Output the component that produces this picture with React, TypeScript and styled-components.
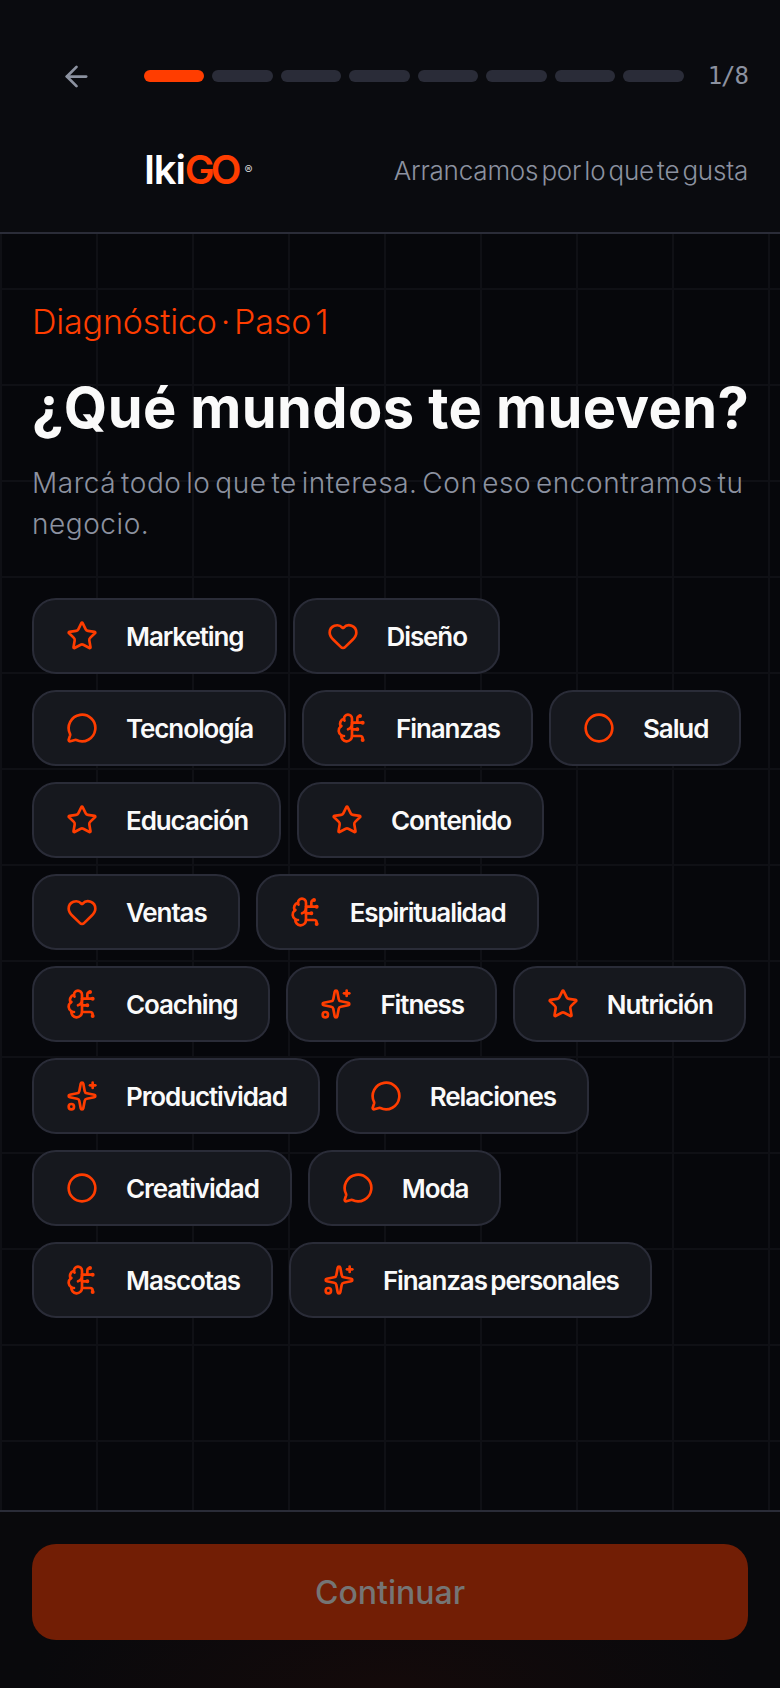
import React from "react";
import styled, { createGlobalStyle } from "styled-components";
import { ArrowLeft, BrainCircuit, Circle, Heart, MessageCircle, Sparkles, Star } from "lucide-react";

const Global = createGlobalStyle`
  html, body { margin: 0; padding: 0; background: #06070b; }
  * { box-sizing: border-box; }
`;

const Page = styled.div`
  width: 780px;
  height: 1688px;
  display: flex;
  flex-direction: column;
  font-family: Inter, "Noto Sans", sans-serif;
  background-color: #06070b;
  background-image:
    linear-gradient(to right, #0f1015 2px, transparent 2px),
    linear-gradient(to bottom, #0f1015 2px, transparent 2px);
  background-size: 96px 96px;
  background-position: 0 0;
`;

const Header = styled.header`
  height: 234px;
  background: #0a0b0f;
  border-bottom: 2px solid #2a2c38;
  padding: 32px 32px 0;
`;

const TopRow = styled.div`
  display: flex;
  align-items: center;
  gap: 24px;
  height: 88px;
`;

const BackButton = styled.button`
  width: 88px;
  height: 88px;
  border: 0;
  padding: 0;
  background: none;
  color: #8c92a0;
  display: flex;
  align-items: center;
  justify-content: center;
`;

const Bars = styled.div`
  flex: 1;
  display: flex;
  gap: 8px;
`;

const Bar = styled.div<{ $on?: boolean }>`
  flex: 1;
  height: 12px;
  border-radius: 6px;
  background: ${(p) => (p.$on ? "#ff3d00" : "#2a2c38")};
`;

const Counter = styled.span`
  font-family: "DejaVu Sans Mono", monospace;
  font-size: 24px;
  letter-spacing: -1px;
  color: #8c92a0;
  line-height: 1;
`;

const BrandRow = styled.div`
  display: flex;
  align-items: center;
  justify-content: space-between;
  padding-left: 112px;
  margin-top: 14px;
  height: 72px;
`;

const Logo = styled.div`
  display: flex;
  align-items: baseline;
  font-size: 40px;
  font-weight: 600;
  letter-spacing: -1.2px;
  color: #fff;
  line-height: 1;
`;

const LogoAccent = styled.span`
  color: #ff3d00;
  letter-spacing: -4px;
`;

const Reg = styled.sup`
  font-size: 12px;
  letter-spacing: 0;
  font-weight: 500;
  margin-left: 7px;
  align-self: center;
  color: #d0d0d0;
`;

const Tagline = styled.span`
  font-size: 26px;
  font-weight: 300;
  color: #8c92a0;
  letter-spacing: -0.2px;
  word-spacing: -4px;
`;

const Main = styled.main`
  flex: 1;
  padding: 66px 32px 0;
`;

const Eyebrow = styled.div`
  font-size: 34px;
  font-weight: 300;
  color: #ff3d00;
  line-height: 44px;
  letter-spacing: -0.15px;
  word-spacing: -5.5px;
`;

const Title = styled.h1`
  margin: 32px 0 0;
  font-size: 56px;
  font-weight: 700;
  line-height: 64px;
  letter-spacing: 0.4px;
  color: #fafafa;
  white-space: nowrap;
`;

const Sub = styled.p`
  margin: 23px 0 0;
  font-size: 28px;
  font-weight: 300;
  line-height: 41px;
  color: #8c92a0;
  letter-spacing: 0.55px;
  word-spacing: -3.6px;
`;

const Chips = styled.div`
  display: flex;
  flex-wrap: wrap;
  gap: 16px;
  margin-top: 53px;
`;

const Chip = styled.button`
  height: 76px;
  padding: 0 31px 0 32px;
  display: flex;
  align-items: center;
  gap: 28px;
  background: #16181e;
  border: 2px solid #2a2c38;
  border-radius: 24px;
  color: #fafafa;
  font-family: inherit;
  font-size: 26px;
  font-weight: 600;
  letter-spacing: -1.1px;
  word-spacing: -2px;
  white-space: nowrap;
  svg { color: #ff3d00; flex: none; }
`;

const Footer = styled.footer`
  height: 178px;
  border-top: 2px solid #2a2c38;
  padding: 32px 32px 0;
  background:
    radial-gradient(ellipse 360px 130px at 50% 100%, #140a0a, transparent),
    #09090c;
`;

const Cta = styled.button`
  width: 100%;
  height: 96px;
  border: 0;
  border-radius: 24px;
  background: #721e05;
  color: #757575;
  font-family: inherit;
  font-size: 32px;
  font-weight: 500;
`;

const icons = { star: Star, heart: Heart, msg: MessageCircle, brain: BrainCircuit, circle: Circle, spark: Sparkles };
type IconKey = keyof typeof icons;

const topics: [string, IconKey][] = [
  ["Marketing", "star"], ["Diseño", "heart"], ["Tecnología", "msg"], ["Finanzas", "brain"], ["Salud", "circle"],
  ["Educación", "star"], ["Contenido", "star"], ["Ventas", "heart"], ["Espiritualidad", "brain"],
  ["Coaching", "brain"], ["Fitness", "spark"], ["Nutrición", "star"], ["Productividad", "spark"],
  ["Relaciones", "msg"], ["Creatividad", "circle"], ["Moda", "msg"], ["Mascotas", "brain"], ["Finanzas personales", "spark"],
];

export default function App() {
  return (
    <Page>
      <Global />
      <Header>
        <TopRow>
          <BackButton aria-label="Volver"><ArrowLeft size={33} strokeWidth={2} /></BackButton>
          <Bars>
            {Array.from({ length: 8 }, (_, i) => <Bar key={i} $on={i === 0} />)}
          </Bars>
          <Counter>1/8</Counter>
        </TopRow>
        <BrandRow>
          <Logo>Iki<LogoAccent>GO</LogoAccent><Reg>®</Reg></Logo>
          <Tagline>Arrancamos por lo que te gusta</Tagline>
        </BrandRow>
      </Header>
      <Main>
        <Eyebrow>Diagnóstico · Paso 1</Eyebrow>
        <Title>¿Qué mundos te mueven?</Title>
        <Sub>Marcá todo lo que te interesa. Con eso encontramos tu negocio.</Sub>
        <Chips>
          {topics.map(([label, key]) => {
            const Icon = icons[key];
            return <Chip key={label}><Icon size={32} strokeWidth={2} />{label}</Chip>;
          })}
        </Chips>
      </Main>
      <Footer><Cta>Continuar</Cta></Footer>
    </Page>
  );
}
